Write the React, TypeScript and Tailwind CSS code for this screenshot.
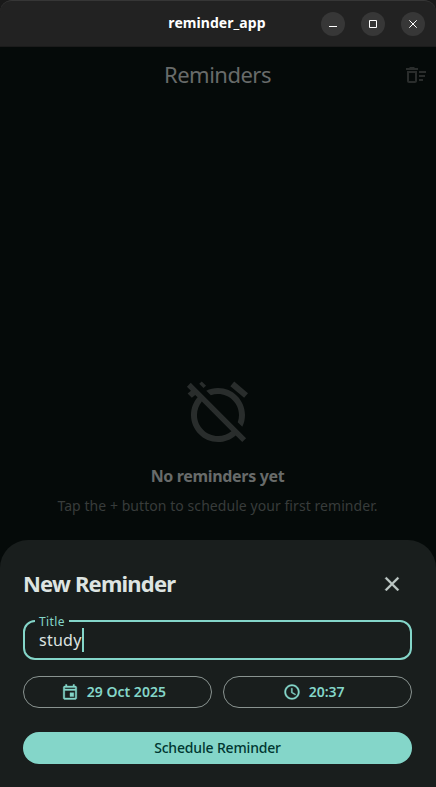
import React from 'react';

function Glyph({ d, className }: { d: string; className: string }) {
  return (
    <svg viewBox="0 0 24 24" className={className} fill="currentColor" aria-hidden="true">
      <path d={d} />
    </svg>
  );
}

const deleteSweep =
  'M15 16h4v2h-4zm0-8h7v2h-7zm0 4h6v2h-6zM3 18c0 1.1.9 2 2 2h6c1.1 0 2-.9 2-2V8H3v10zm2-8h6v8H5v-8zm5-6H6L5 5H2v2h12V5h-3z';
const alarmOff =
  'M12 6c3.87 0 7 3.13 7 7 0 .84-.16 1.65-.43 2.4l1.52 1.52c.58-1.19.91-2.51.91-3.92 0-4.97-4.03-9-9-9-1.41 0-2.73.33-3.92.91L9.6 6.43C10.35 6.16 11.16 6 12 6zm10-.28l-4.6-3.86-1.29 1.53 4.6 3.86L22 5.72zM2.92 2.29L1.65 3.57 2.98 4.9l-1.11.93 1.42 1.42 1.11-.94.8.8C3.83 8.69 3 10.75 3 13c0 4.97 4.02 9 9 9 2.25 0 4.31-.83 5.89-2.2l2.2 2.2 1.27-1.27L3.89 3.27l-.97-.98zm13.55 16.1C15.26 19.39 13.7 20 12 20c-3.87 0-7-3.13-7-7 0-1.7.61-3.26 1.61-4.47l9.86 9.86zM8.02 3.28L6.6 1.86l-.86.71 1.42 1.42.86-.71z';
const close =
  'M19 6.41L17.59 5 12 10.59 6.41 5 5 6.41 10.59 12 5 17.59 6.41 19 12 13.41 17.59 19 19 17.59 13.41 12z';
const event =
  'M19 4h-1V2h-2v2H8V2H6v2H5c-1.11 0-1.99.9-1.99 2L3 20c0 1.1.89 2 2 2h14c1.1 0 2-.9 2-2V6c0-1.1-.9-2-2-2zm0 16H5V10h14v10zm0-12H5V6h14v2zm-7 5h5v5h-5z';
const schedule =
  'M11.99 2C6.47 2 2 6.48 2 12s4.47 10 9.99 10C17.52 22 22 17.52 22 12S17.52 2 11.99 2zM12 20c-4.42 0-8-3.58-8-8s3.58-8 8-8 8 3.58 8 8-3.58 8-8 8zm.5-13H11v6l5.25 3.15.75-1.23-4.5-2.67z';

function WindowButton({ label, d }: { label: string; d: string }) {
  return (
    <button aria-label={label} className="flex size-6 items-center justify-center rounded-full bg-[#373737]">
      <svg viewBox="0 0 24 24" className="size-6" fill="none" stroke="#fff" aria-hidden="true">
        <path d={d} />
      </svg>
    </button>
  );
}

function TitleBar() {
  return (
    <header className="grid h-[47px] grid-cols-[1fr_auto_1fr] items-center rounded-t-xl border-t border-b border-t-[#363636] border-b-[#1b1b1b] bg-[#222222] pr-[11px]">
      <span />
      <h1 className="-mt-0.5 pl-[9px] text-[14px] leading-5 font-bold tracking-[0.06px] text-white">reminder_app</h1>
      <div className="flex justify-end gap-4">
        <WindowButton label="Minimize" d="M8 14.5h8" />
        <WindowButton label="Maximize" d="M8.5 8.5h7v7h-7z" />
        <WindowButton label="Close" d="M8.3 8.3l7.4 7.4M15.7 8.3l-7.4 7.4" />
      </div>
    </header>
  );
}

export default function App() {
  return (
    <div className="flex h-[787px] w-[436px] flex-col overflow-hidden bg-[#050a09] font-['Noto_Sans',sans-serif]">
      <div className="bg-[#191919]">
        <TitleBar />
      </div>

      <div className="grid h-14 grid-cols-[1fr_auto_1fr] items-center pr-2">
        <span />
        <h2 className="-mt-0.5 pl-[7px] text-[22px] leading-7 tracking-[-0.5px] text-[#686b6a]">Reminders</h2>
        <Glyph d={deleteSweep} className="size-6 justify-self-end text-[#2a2d2c]" />
      </div>

      <main className="flex flex-1 flex-col items-center pt-[273px] pr-px">
        <Glyph d={alarmOff} className="size-[72px] text-[#292d2c]" />
        <p className="mt-4 text-[16px] leading-6 font-bold tracking-[-0.33px] text-[#686b6a]">No reminders yet</p>
        <p className="mt-2 text-[14px] leading-5 tracking-[0.06px] text-[#383c3b]">
          Tap the + button to schedule your first reminder.
        </p>
      </main>

      <section className="flex h-[247px] flex-col rounded-t-[28px] bg-[#191e1d] pt-6 pr-6 pl-[23px]">
        <div className="flex h-10 items-center justify-between">
          <h3 className="-mt-0.5 text-[22px] leading-7 font-bold tracking-[-0.8px] text-[#dde4e1]">New Reminder</h3>
          <button aria-label="Close" className="flex size-10 items-center justify-center text-[#bec9c6]">
            <Glyph d={close} className="size-6 stroke-current stroke-[0.3]" />
          </button>
        </div>

        <label className="relative mt-4 flex h-10 items-center rounded-xl border-2 border-[#84d6c9] pl-3.5">
          <span className="absolute -top-2 left-2.5 w-[34px] bg-[#191e1d] pl-1 text-[12px] leading-4 tracking-[0.4px] text-[#84d6c9]">
            Title
          </span>
          <span className="w-[43px] text-[16px] leading-6 tracking-[0.25px] whitespace-nowrap text-[#dde4e1]">study</span>
          <span className="h-6 w-0.5 bg-[#84d6c9]" />
        </label>

        <div className="mt-4 flex gap-[11.5px] text-[14px] leading-5 font-semibold text-[#84d6c9]">
          <button className="flex h-8 flex-1 items-center justify-center gap-2 rounded-full border border-[#899390] pr-2">
            <Glyph d={event} className="size-[18px] stroke-current stroke-[0.5]" />
            <span>29 Oct 2025</span>
          </button>
          <button className="flex h-8 flex-1 items-center justify-center gap-2 rounded-full border border-[#899390] pr-2">
            <Glyph d={schedule} className="size-[18px] stroke-current stroke-[0.5]" />
            <span>20:37</span>
          </button>
        </div>

        <button className="mt-6 h-8 rounded-full bg-[#84d6c9] text-[14px] leading-5 font-medium tracking-[-0.17px] text-[#003731]">
          Schedule Reminder
        </button>
      </section>
    </div>
  );
}
